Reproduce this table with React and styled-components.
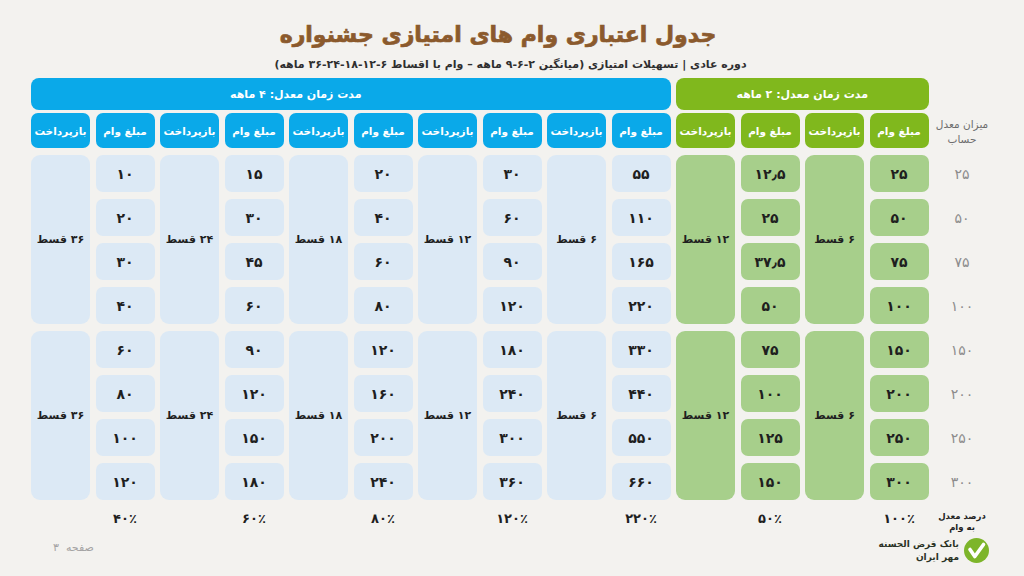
import React from "react";
import styled, { createGlobalStyle, css } from "styled-components";

const GlobalStyle = createGlobalStyle`
  html, body {
    margin: 0;
    padding: 0;
    background: #f3f2ef;
  }
  body {
    font-family: "DejaVu Sans", "Noto Sans", sans-serif;
  }
`;

const BLUE = "#0aa9e9";
const GREEN = "#80b81d";
const LIGHT_BLUE = "#dce9f5";
const LIGHT_GREEN = "#a7cf8b";

const columns = css`
  display: grid;
  grid-template-columns: 56px repeat(14, 59px);
  column-gap: 5.5px;
`;

const Page = styled.div`
  width: 1024px;
  height: 576px;
  box-sizing: border-box;
  padding: 16px 34px 0 31px;
  direction: rtl;
  overflow: hidden;
`;

const Title = styled.h1`
  margin: 0;
  text-align: center;
  font-size: 22px;
  line-height: 38px;
  font-weight: 700;
  color: #8b5a2d;
  -webkit-text-stroke: 0.7px #8b5a2d;
  padding-right: 25px;
`;

const Subtitle = styled.div`
  text-align: center;
  font-size: 11px;
  line-height: 16px;
  font-weight: 700;
  color: #2f2f2f;
  margin-top: 3px;
`;

const BarRow = styled.div`
  ${columns};
  margin-top: 5px;
  margin-bottom: 3px;
`;

const GroupBar = styled.div`
  grid-column: ${(p) => p.$col};
  height: 32px;
  border-radius: 8px;
  background: ${(p) => (p.$tone === "green" ? GREEN : BLUE)};
  color: #fff;
  font-size: 11px;
  font-weight: 700;
  display: flex;
  align-items: center;
  justify-content: center;
  padding-right: ${(p) => p.$shift || 0}px;
`;

const Table = styled.div`
  ${columns};
  grid-template-rows: 35px repeat(8, 37px) 22px;
  row-gap: 7px;
`;

const RowLabel = styled.div`
  grid-column: 1;
  grid-row: 1;
  color: #6d6d6d;
  font-size: 10.5px;
  line-height: 15px;
  text-align: center;
  align-self: center;
  padding-top: 2px;
`;

const HeadCell = styled.div`
  grid-column: ${(p) => p.$col};
  grid-row: 1;
  border-radius: 7px;
  background: ${(p) => (p.$tone === "green" ? GREEN : BLUE)};
  color: #fff;
  font-size: 10.5px;
  font-weight: 700;
  display: flex;
  align-items: center;
  justify-content: center;
  white-space: nowrap;
`;

const Balance = styled.div`
  grid-column: 1;
  grid-row: ${(p) => p.$row};
  color: #8c8c8c;
  font-size: 14px;
  display: flex;
  align-items: center;
  justify-content: center;
`;

const Cell = styled.div`
  grid-column: ${(p) => p.$col};
  grid-row: ${(p) => p.$row};
  border-radius: 7px;
  background: ${(p) => (p.$tone === "green" ? LIGHT_GREEN : LIGHT_BLUE)};
  color: #1f1f1f;
  font-size: 14px;
  font-weight: 700;
  display: flex;
  align-items: center;
  justify-content: center;
  white-space: nowrap;
`;

const Merged = styled(Cell)`
  border-radius: 9px;
  font-size: 11px;
`;

const Percent = styled.div`
  grid-column: ${(p) => p.$col};
  grid-row: 10;
  color: #1f1f1f;
  font-size: 13px;
  font-weight: 700;
  display: flex;
  align-items: center;
  justify-content: center;
`;

const PercentLabel = styled.div`
  grid-column: 1;
  grid-row: 10;
  font-size: 8.5px;
  line-height: 11px;
  font-weight: 700;
  color: #222;
  text-align: center;
  padding-top: 4px;
`;

const Footer = styled.div`
  display: flex;
  justify-content: space-between;
  align-items: center;
  margin-top: 8px;
  padding-left: 22px;
`;

const Logo = styled.div`
  display: flex;
  align-items: center;
  gap: 4px;
`;

const LogoText = styled.div`
  font-size: 9px;
  line-height: 13px;
  font-weight: 700;
  color: #2b3326;
  text-align: right;
`;

const PageNo = styled.div`
  font-size: 11px;
  color: #a3a3a3;
  padding-bottom: 6px;
`;

const pairs = [
  { tone: "green", repay: "۶ قسط", pct: "۱۰۰٪", values: ["۲۵", "۵۰", "۷۵", "۱۰۰", "۱۵۰", "۲۰۰", "۲۵۰", "۳۰۰"] },
  { tone: "green", repay: "۱۲ قسط", pct: "۵۰٪", values: ["۱۲٫۵", "۲۵", "۳۷٫۵", "۵۰", "۷۵", "۱۰۰", "۱۲۵", "۱۵۰"] },
  { tone: "blue", repay: "۶ قسط", pct: "۲۲۰٪", values: ["۵۵", "۱۱۰", "۱۶۵", "۲۲۰", "۳۳۰", "۴۴۰", "۵۵۰", "۶۶۰"] },
  { tone: "blue", repay: "۱۲ قسط", pct: "۱۲۰٪", values: ["۳۰", "۶۰", "۹۰", "۱۲۰", "۱۸۰", "۲۴۰", "۳۰۰", "۳۶۰"] },
  { tone: "blue", repay: "۱۸ قسط", pct: "۸۰٪", values: ["۲۰", "۴۰", "۶۰", "۸۰", "۱۲۰", "۱۶۰", "۲۰۰", "۲۴۰"] },
  { tone: "blue", repay: "۲۴ قسط", pct: "۶۰٪", values: ["۱۵", "۳۰", "۴۵", "۶۰", "۹۰", "۱۲۰", "۱۵۰", "۱۸۰"] },
  { tone: "blue", repay: "۳۶ قسط", pct: "۴۰٪", values: ["۱۰", "۲۰", "۳۰", "۴۰", "۶۰", "۸۰", "۱۰۰", "۱۲۰"] },
];

const balances = ["۲۵", "۵۰", "۷۵", "۱۰۰", "۱۵۰", "۲۰۰", "۲۵۰", "۳۰۰"];

const CheckMark = () => (
  <svg width="27" height="27" viewBox="0 0 27 27">
    <circle cx="13.5" cy="13.5" r="12.5" fill="#7db52a" />
    <path
      d="M7 12.5 L11.8 19.5 L20.5 7.5"
      fill="none"
      stroke="#fff"
      strokeWidth="3.6"
      strokeLinecap="round"
      strokeLinejoin="round"
    />
  </svg>
);

export default function App() {
  return (
    <Page>
      <GlobalStyle />
      <Title>جدول اعتباری وام های امتیازی جشنواره</Title>
      <Subtitle>
        دوره عادی | تسهیلات امتیازی (میانگین ۲-۶-۹ ماهه – وام با اقساط ۶-۱۲-۱۸-۲۴-۳۶ ماهه)
      </Subtitle>

      <BarRow>
        <GroupBar $col="2 / span 4" $tone="green">
          مدت زمان معدل: ۲ ماهه
        </GroupBar>
        <GroupBar $col="6 / span 10" $tone="blue" $shift={110}>
          مدت زمان معدل: ۴ ماهه
        </GroupBar>
      </BarRow>

      <Table>
        <RowLabel>
          میزان معدل
          <br />
          حساب
        </RowLabel>

        {pairs.map((pair, i) => {
          const amountCol = 2 + i * 2;
          const repayCol = 3 + i * 2;
          return (
            <React.Fragment key={i}>
              <HeadCell $col={amountCol} $tone={pair.tone}>
                مبلغ وام
              </HeadCell>
              <HeadCell $col={repayCol} $tone={pair.tone}>
                بازپرداخت
              </HeadCell>
              {pair.values.map((v, r) => (
                <Cell key={r} $col={amountCol} $row={r + 2} $tone={pair.tone}>
                  {v}
                </Cell>
              ))}
              <Merged $col={repayCol} $row="2 / span 4" $tone={pair.tone}>
                {pair.repay}
              </Merged>
              <Merged $col={repayCol} $row="6 / span 4" $tone={pair.tone}>
                {pair.repay}
              </Merged>
              <Percent $col={amountCol}>{pair.pct}</Percent>
            </React.Fragment>
          );
        })}

        {balances.map((b, r) => (
          <Balance key={r} $row={r + 2}>
            {b}
          </Balance>
        ))}

        <PercentLabel>
          درصد معدل
          <br />
          به وام
        </PercentLabel>
      </Table>

      <Footer>
        <Logo>
          <CheckMark />
          <LogoText>
            بانک قرض الحسنه
            <br />
            مهر ایران
          </LogoText>
        </Logo>
        <PageNo>صفحه &nbsp;۳</PageNo>
      </Footer>
    </Page>
  );
}
